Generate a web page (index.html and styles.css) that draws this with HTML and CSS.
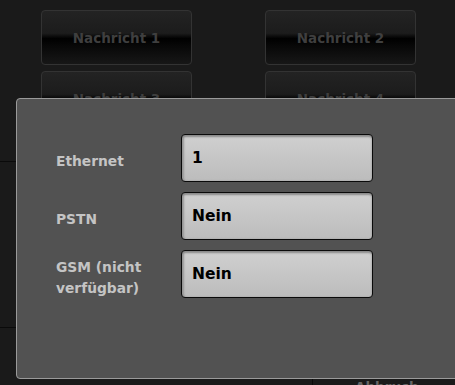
FILE: index.html
```html
<html>
	<head>
		<link rel="stylesheet" href="styles.css">
	</head>
	<body>
		<div class="screen">
			<div class="menu">
				<button class="msgbtn">Nachricht 1</button>
				<button class="msgbtn">Nachricht 2</button>
				<button class="msgbtn">Nachricht 3</button>
				<button class="msgbtn">Nachricht 4</button>
			</div>
			<div class="list">
				<div class="row"></div>
				<div class="row"></div>
			</div>
			<div class="footer">
				<div class="fcell"></div>
				<div class="fcell abort">Abbruch</div>
			</div>
		</div>

		<div class="dialog">
			<div class="field">
				<div class="label">Ethernet</div>
				<div class="value">1</div>
			</div>
			<div class="field">
				<div class="label">PSTN</div>
				<div class="value">Nein</div>
			</div>
			<div class="field">
				<div class="label">GSM (nicht verfügbar)</div>
				<div class="value">Nein</div>
			</div>
		</div>
	</body>
</html>
```

FILE: styles.css
```css
body{
	margin:0;
	width:455px;
	height:385px;
	overflow:hidden;
	background:#1a1a1a;
	font-family:"DejaVu Sans", Verdana, sans-serif;
	position:relative;
}
.screen{
	height:385px;
	overflow:hidden;
}
.menu{
	display:grid;
	grid-template-columns:151px 151px;
	column-gap:73px;
	row-gap:6px;
	padding:10px 0 0 41px;
}
.msgbtn{
	height:55px;
	border:1px solid #333;
	border-radius:4px;
	background:linear-gradient(#232323 0%, #1c1c1c 42%, #000 52%, #080808 66%, #171717 100%);
	color:#3f3f3f;
	font-family:"DejaVu Sans", Verdana, sans-serif;
	font-weight:bold;
	font-size:13.5px;
	padding:0;
}
.list{
	margin-top:35px;
}
.row{
	height:165px;
	border-top:1px solid #0a0a0a;
}
.footer{
	display:flex;
	margin-top:-114px;
	height:20px;
}
.fcell{
	width:312px;
}
.abort{
	flex:1;
	border-left:1px solid #0a0a0a;
	color:#666;
	font-weight:bold;
	font-size:13.5px;
	line-height:16px;
	padding:0 0 0 42px;
}
.dialog{
	position:absolute;
	left:16px;
	top:98px;
	width:460px;
	height:281px;
	background:#525252;
	border:1px solid #9a9a9a;
	border-radius:4px;
	padding:35px 0 0 39px;
	box-sizing:border-box;
	display:flex;
	flex-direction:column;
	gap:10px;
}
.field{
	display:flex;
	align-items:center;
	height:48px;
}
.label{
	width:125px;
	color:#c4c4c4;
	font-weight:bold;
	font-size:13.8px;
	line-height:21px;
	padding:7px 14px 0 0;
	box-sizing:border-box;
}
.value{
	width:192px;
	height:48px;
	box-sizing:border-box;
	border:1px solid #0a0a0a;
	border-radius:4px;
	background:linear-gradient(#d0d0d0, #bcbcbc);
	box-shadow:inset 0 2px 2px #8a8a8a, inset 2px 0 2px #9a9a9a;
	color:#000;
	font-weight:bold;
	font-size:15.5px;
	padding:14px 0 0 10px;
}
```
